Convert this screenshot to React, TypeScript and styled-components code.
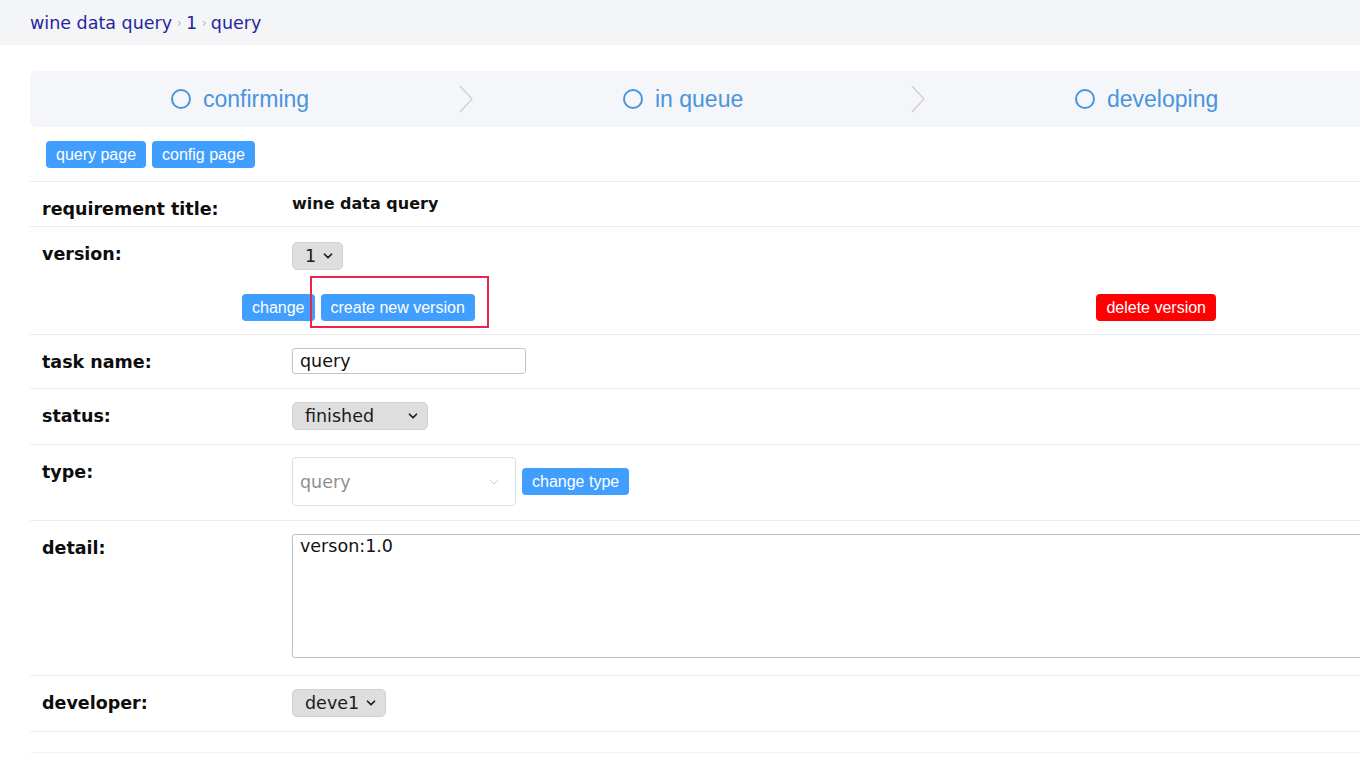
import React from "react";
import styled, { createGlobalStyle } from "styled-components";
import { ChevronDown } from "lucide-react";

const GlobalStyle = createGlobalStyle`
  html, body {
    margin: 0;
    padding: 0;
    overflow: hidden;
    background: #ffffff;
  }
  body {
    font-family: "DejaVu Sans", sans-serif;
    color: #111;
  }
  * { box-sizing: border-box; }
`;

const Page = styled.div`
  width: 1360px;
  min-height: 757px;
  overflow: hidden;
`;

const Breadcrumb = styled.nav`
  height: 45px;
  background: #f4f5f7;
  display: flex;
  align-items: center;
  padding-left: 30px;
  font-family: "DejaVu Sans", sans-serif;
  font-size: 17.5px;
  color: #2626a0;
`;

const Crumb = styled.span`
  white-space: nowrap;
`;

const CrumbSep = styled.span`
  color: #b4b4b4;
  font-size: 12px;
  margin: 0 4px 0 5px;
`;

const Main = styled.main`
  width: 1386px;
  padding: 26px 0 0 30px;
`;

const Content = styled.div`
  width: 1356px;
`;

const Steps = styled.div`
  display: flex;
  height: 56px;
  background: #f4f6f9;
  border-radius: 6px 0 0 6px;
`;

const Step = styled.div`
  width: 452px;
  display: flex;
  align-items: center;
  justify-content: space-between;
  padding: 0 8px 0 140px;
`;

const StepLabel = styled.div`
  display: flex;
  align-items: center;
  gap: 11px;
  font-family: "Liberation Sans", sans-serif;
  font-size: 23px;
  color: #4a94de;
`;

const PageButtons = styled.div`
  display: flex;
  gap: 6px;
  padding: 14px 16px 13px;
  border-bottom: 1px solid #ececec;
`;

const Button = styled.button<{ $danger?: boolean }>`
  height: 27px;
  padding: 0 10px;
  border: none;
  border-radius: 4px;
  background: ${(p) => (p.$danger ? "#ff0000" : "#409eff")};
  color: #fff;
  font-family: "Liberation Sans", sans-serif;
  font-size: 16px;
  line-height: 27px;
  white-space: nowrap;
  cursor: pointer;
`;

const Row = styled.div`
  border-bottom: 1px solid #ececec;
`;

const Grid = styled.div`
  display: grid;
  grid-template-columns: 262px 1fr;
`;

const Label = styled.div`
  padding: 17px 12px 7px;
  font-family: "DejaVu Sans", sans-serif;
  font-weight: bold;
  font-size: 17.5px;
  line-height: 20px;
  color: #0d0d0d;
`;

const Value = styled.div<{ $top?: number; $bottom?: number }>`
  padding: ${(p) => p.$top ?? 13}px 0 ${(p) => p.$bottom ?? 14}px;
  display: flex;
  align-items: center;
  gap: 6px;
`;

const TitleText = styled.div`
  font-family: "DejaVu Sans", sans-serif;
  font-weight: bold;
  font-size: 16px;
  line-height: 20px;
  color: #111;
`;

const FakeSelect = styled.div<{ $w: number }>`
  width: ${(p) => p.$w}px;
  height: 28px;
  display: flex;
  align-items: center;
  justify-content: space-between;
  padding: 0 7px 0 12px;
  background: #dedede;
  border: 1px solid #d2d2d2;
  border-radius: 5px;
  font-family: "DejaVu Sans", sans-serif;
  font-size: 17.5px;
  color: #1a1a1a;
`;

const ActionRow = styled.div`
  display: flex;
  align-items: center;
  justify-content: space-between;
  padding: 23px 170px 13px 212px;
`;

const ActionGroup = styled.div`
  display: flex;
  gap: 6px;
`;

const Highlight = styled.div`
  position: relative;
  &::after {
    content: "";
    position: absolute;
    left: -11px;
    right: -14px;
    top: -18px;
    bottom: -7px;
    border: 2px solid #e8264a;
    pointer-events: none;
  }
`;

const TextInput = styled.input`
  width: 234px;
  height: 26px;
  padding: 0 7px;
  border: 1px solid #c4c4c4;
  border-radius: 3px;
  font-family: "DejaVu Sans", sans-serif;
  font-size: 17.5px;
  color: #111;
  outline: none;
`;

const TypeSelect = styled.div`
  width: 224px;
  height: 49px;
  display: flex;
  align-items: center;
  justify-content: space-between;
  padding: 0 13px 0 7px;
  border: 1px solid #dcdfe6;
  border-radius: 4px;
  font-family: "DejaVu Sans", sans-serif;
  font-size: 17.5px;
  color: #8f8f8f;
`;

const TextArea = styled.textarea`
  width: 100%;
  height: 124px;
  padding: 0 7px;
  border: 1px solid #c2c2c2;
  border-radius: 3px;
  font-family: "DejaVu Sans", sans-serif;
  font-size: 17.5px;
  line-height: 22px;
  color: #111;
  resize: none;
  outline: none;
  display: block;
`;

const Footer = styled.div`
  height: 21px;
  border-bottom: 1px solid #f3f3f3;
`;

const Circle = () => (
  <svg width="22" height="22" viewBox="0 0 22 22">
    <circle cx="11" cy="11" r="9" fill="none" stroke="#4a94de" strokeWidth="2" />
  </svg>
);

const Chevron = () => (
  <svg width="16" height="28" viewBox="0 0 16 28">
    <polyline points="2,1 14,14 2,27" fill="none" stroke="#cfcfcf" strokeWidth="1.3" />
  </svg>
);

const steps = ["confirming", "in queue", "developing"];

const Select = ({ value, width }: { value: string; width: number }) => (
  <FakeSelect $w={width}>
    <span>{value}</span>
    <ChevronDown size={14} strokeWidth={3} color="#1a1a1a" />
  </FakeSelect>
);

export default function App() {
  return (
    <Page>
      <GlobalStyle />
      <Breadcrumb>
        <Crumb>wine data query</Crumb>
        <CrumbSep>›</CrumbSep>
        <Crumb>1</Crumb>
        <CrumbSep>›</CrumbSep>
        <Crumb>query</Crumb>
      </Breadcrumb>
      <Main>
        <Content>
          <Steps>
            {steps.map((s, i) => (
              <Step key={s}>
                <StepLabel>
                  <Circle />
                  <span>{s}</span>
                </StepLabel>
                {i < steps.length - 1 && <Chevron />}
              </Step>
            ))}
          </Steps>
          <PageButtons>
            <Button>query page</Button>
            <Button>config page</Button>
          </PageButtons>

          <Row>
            <Grid>
              <Label>requirement title:</Label>
              <Value $top={8} $bottom={9}>
                <TitleText>wine data query</TitleText>
              </Value>
            </Grid>
          </Row>

          <Row>
            <Grid>
              <Label>version:</Label>
              <Value $bottom={0}>
                <Select value="1" width={51} />
              </Value>
            </Grid>
            <ActionRow>
              <ActionGroup>
                <Button>change</Button>
                <Highlight>
                  <Button>create new version</Button>
                </Highlight>
              </ActionGroup>
              <Button $danger>delete version</Button>
            </ActionRow>
          </Row>

          <Row>
            <Grid>
              <Label>task name:</Label>
              <Value>
                <TextInput defaultValue="query" />
              </Value>
            </Grid>
          </Row>

          <Row>
            <Grid>
              <Label>status:</Label>
              <Value>
                <Select value="finished" width={136} />
              </Value>
            </Grid>
          </Row>

          <Row>
            <Grid>
              <Label>type:</Label>
              <Value $top={12} $bottom={14}>
                <TypeSelect>
                  <span>query</span>
                  <ChevronDown size={16} strokeWidth={1.2} color="#c0c4cc" />
                </TypeSelect>
                <Button>change type</Button>
              </Value>
            </Grid>
          </Row>

          <Row>
            <Grid>
              <Label>detail:</Label>
              <Value $top={13} $bottom={17}>
                <TextArea defaultValue="verson:1.0" />
              </Value>
            </Grid>
          </Row>

          <Row>
            <Grid>
              <Label>developer:</Label>
              <Value>
                <Select value="deve1" width={94} />
              </Value>
            </Grid>
          </Row>
          <Footer />
        </Content>
      </Main>
    </Page>
  );
}
